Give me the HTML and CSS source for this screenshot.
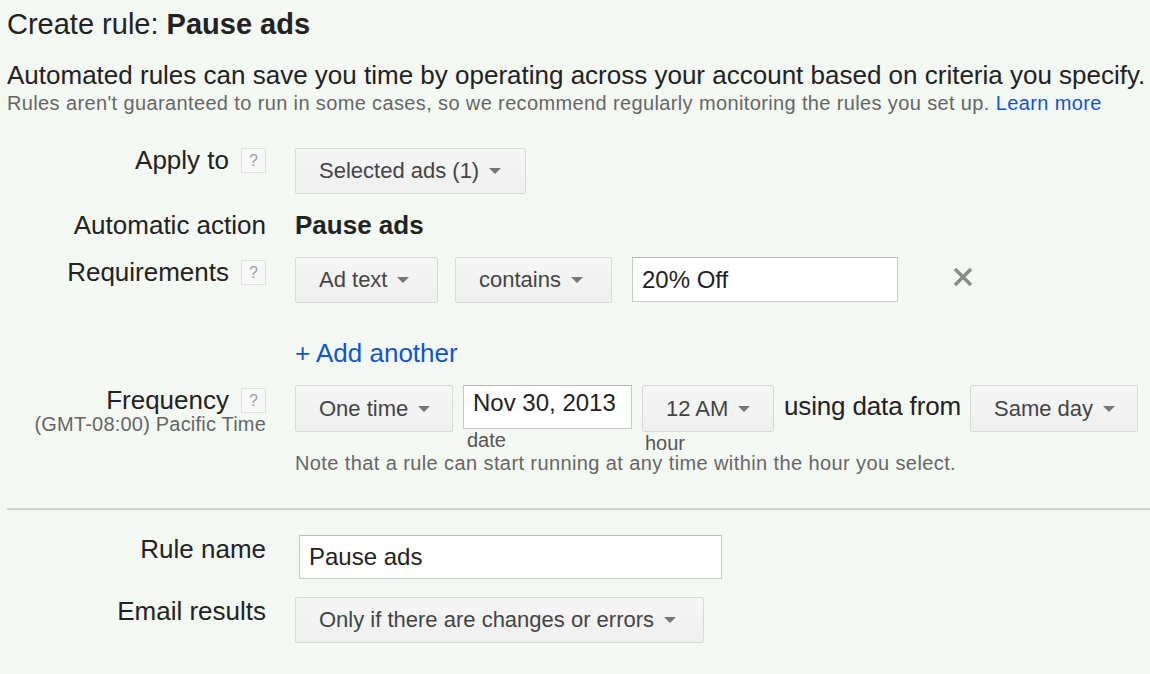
FILE: index.html
```html
<!DOCTYPE html>
<html>
<head>
<meta charset="utf-8">
<link rel="stylesheet" href="styles.css">
</head>
<body>
<div class="page">
  <h1 class="title">Create rule: <b>Pause ads</b></h1>
  <p class="intro">Automated rules can save you time by operating across your account based on criteria you specify.</p>
  <p class="note">Rules aren't guaranteed to run in some cases, so we recommend regularly monitoring the rules you set up. <a class="link" href="#">Learn more</a></p>

  <div class="form">
    <div class="row row-apply">
      <div class="label"><span class="label-text">Apply to</span><span class="help">?</span></div>
      <div class="controls">
        <div class="btn btn-apply">Selected ads (1)<span class="caret"></span></div>
      </div>
    </div>

    <div class="row row-action">
      <div class="label"><span class="label-text">Automatic action</span></div>
      <div class="controls"><span class="action-value">Pause ads</span></div>
    </div>

    <div class="row row-req">
      <div class="label"><span class="label-text">Requirements</span><span class="help">?</span></div>
      <div class="controls">
        <div class="btn btn-adtext">Ad text<span class="caret"></span></div>
        <div class="btn btn-contains">contains<span class="caret"></span></div>
        <div class="input input-req">20% Off</div>
        <span class="remove">
          <svg width="22" height="22" viewBox="0 0 22 22"><path d="M3 3 L19 19 M19 3 L3 19" stroke="#8c8c8c" stroke-width="3.6" stroke-linecap="butt"/></svg>
        </span>
      </div>
    </div>

    <div class="row row-add">
      <div class="label"></div>
      <div class="controls"><a class="add" href="#">+ Add another</a></div>
    </div>

    <div class="row row-freq">
      <div class="label label-freq">
        <div class="label-line"><span class="label-text">Frequency</span><span class="help">?</span></div>
        <div class="sublabel">(GMT-08:00) Pacific Time</div>
      </div>
      <div class="controls controls-freq">
        <div class="freq-line">
          <div class="btn btn-onetime">One time<span class="caret"></span></div>
          <div class="field field-date">
            <div class="input input-date">Nov 30, 2013</div>
            <div class="caption caption-date">date</div>
          </div>
          <div class="field field-hour">
            <div class="btn btn-hour">12 AM<span class="caret"></span></div>
            <div class="caption caption-hour">hour</div>
          </div>
          <span class="using">using data from</span>
          <div class="btn btn-same">Same day<span class="caret"></span></div>
        </div>
        <div class="hint">Note that a rule can start running at any time within the hour you select.</div>
      </div>
    </div>
  </div>

  <hr class="divider">

  <div class="form">
    <div class="row row-name">
      <div class="label"><span class="label-text">Rule name</span></div>
      <div class="controls"><div class="input input-name">Pause ads</div></div>
    </div>
    <div class="row row-email">
      <div class="label"><span class="label-text">Email results</span></div>
      <div class="controls"><div class="btn btn-email">Only if there are changes or errors<span class="caret"></span></div></div>
    </div>
  </div>
</div>
</body>
</html>
```

FILE: styles.css
```css
html, body {
  margin: 0;
  padding: 0;
  background: #f4f8f3;
}
body {
  font-family: "Liberation Sans", Arial, sans-serif;
  color: #222;
  overflow: hidden;
}
.page {
  padding: 0 0 0 7px;
  width: 1143px;
}
.title {
  margin: 7px 0 0;
  font-size: 29px;
  font-weight: normal;
  line-height: 34px;
  color: #222;
}
.title b { font-weight: bold; }
.intro {
  margin: 20px 0 0;
  font-size: 26px;
  line-height: 28px;
  white-space: nowrap;
  overflow: hidden;
}
.note {
  margin: 2px 0 0;
  font-size: 20px;
  line-height: 24px;
  letter-spacing: 0.37px;
  color: #666;
  white-space: nowrap;
}
.link { color: #1155cc; text-decoration: none; }

.form { display: flex; flex-direction: column; }
.row { display: flex; align-items: flex-start; }
.label {
  width: 259px;
  flex: none;
  display: flex;
  justify-content: flex-end;
  align-items: flex-start;
  font-size: 26px;
  line-height: 30px;
  color: #222;
  text-align: right;
}
.label-text { display: block; }
.help {
  flex: none;
  width: 23px;
  height: 23px;
  margin: 3px 0 0 12px;
  border: 1px solid #dedede;
  background: #f7f7f7;
  color: #a0a0a0;
  font-size: 16px;
  line-height: 23px;
  text-align: center;
  box-sizing: content-box;
}
.controls {
  margin-left: 29px;
  display: flex;
  align-items: flex-start;
}
.btn {
  box-sizing: border-box;
  height: 46px;
  display: flex;
  align-items: center;
  padding: 0 26px 0 23px;
  border: 1px solid #d9d9d9;
  border-radius: 2px;
  background: linear-gradient(#f6f6f6, #efefef);
  color: #444;
  font-size: 22px;
  white-space: nowrap;
}
.caret {
  width: 0;
  height: 0;
  margin-left: 10px;
  border-left: 6px solid transparent;
  border-right: 6px solid transparent;
  border-top: 6px solid #777;
}
.input {
  box-sizing: border-box;
  height: 45px;
  display: flex;
  align-items: center;
  padding: 0 9px;
  border: 1px solid #c9c9c9;
  border-top-color: #bcbcbc;
  background: #fff;
  color: #222;
  font-size: 24px;
  white-space: nowrap;
}

.row-apply { margin-top: 33px; }
.row-apply .label { margin-top: -3px; }
.btn-apply { width: 231px; }

.row-action { margin-top: 16px; }
.action-value { font-size: 26px; line-height: 30px; font-weight: bold; color: #222; }

.row-req { margin-top: 17px; }
.btn-adtext { width: 143px; }
.btn-contains { width: 157px; margin-left: 17px; }
.input-req { width: 266px; margin-left: 20px; }
.remove { margin: 9px 0 0 54px; display: block; line-height: 0; }

.row-add { margin-top: 35px; }
.add { color: #1155cc; text-decoration: none; font-size: 26px; line-height: 30px; }

.row-freq { margin-top: 17px; }
.label-freq { flex-direction: column; align-items: flex-end; }
.label-line { display: flex; align-items: flex-start; }
.sublabel {
  font-size: 20px;
  line-height: 22px;
  letter-spacing: 0.2px;
  color: #666;
  margin-top: -2px;
}
.controls-freq { flex-direction: column; }
.freq-line { display: flex; align-items: flex-start; }
.btn-onetime { width: 158px; height: 47px; }
.field { display: flex; flex-direction: column; margin-left: 10px; }
.input-date {
  width: 169px;
  height: 44px;
  align-items: flex-start;
  padding: 3px 9px 0;
  line-height: 28px;
}
.btn-hour { width: 132px; height: 47px; }
.caption { font-size: 20px; line-height: 19px; color: #555; }
.caption-date { padding-left: 4px; margin-top: 2px; }
.caption-hour { padding-left: 3px; margin-top: 2px; }
.using {
  font-size: 26px;
  line-height: 30px;
  letter-spacing: -0.15px;
  margin: 6px 9px 0 10px;
  color: #222;
  white-space: nowrap;
}
.btn-same { width: 168px; height: 47px; }
.hint {
  font-size: 20px;
  line-height: 20px;
  letter-spacing: 0.4px;
  color: #666;
  margin-top: 0;
  white-space: nowrap;
}

.divider {
  margin: 35px 0 0;
  border: 0;
  border-top: 2px solid #cfd3ce;
  width: 1143px;
}

.row-name { margin-top: 25px; }
.row-name .label { margin-top: -1px; }
.input-name { width: 423px; height: 44px; margin-left: 4px; }

.row-email { margin-top: 18px; }
.row-email .label { margin-top: -1px; }
.btn-email { width: 409px; }
```
